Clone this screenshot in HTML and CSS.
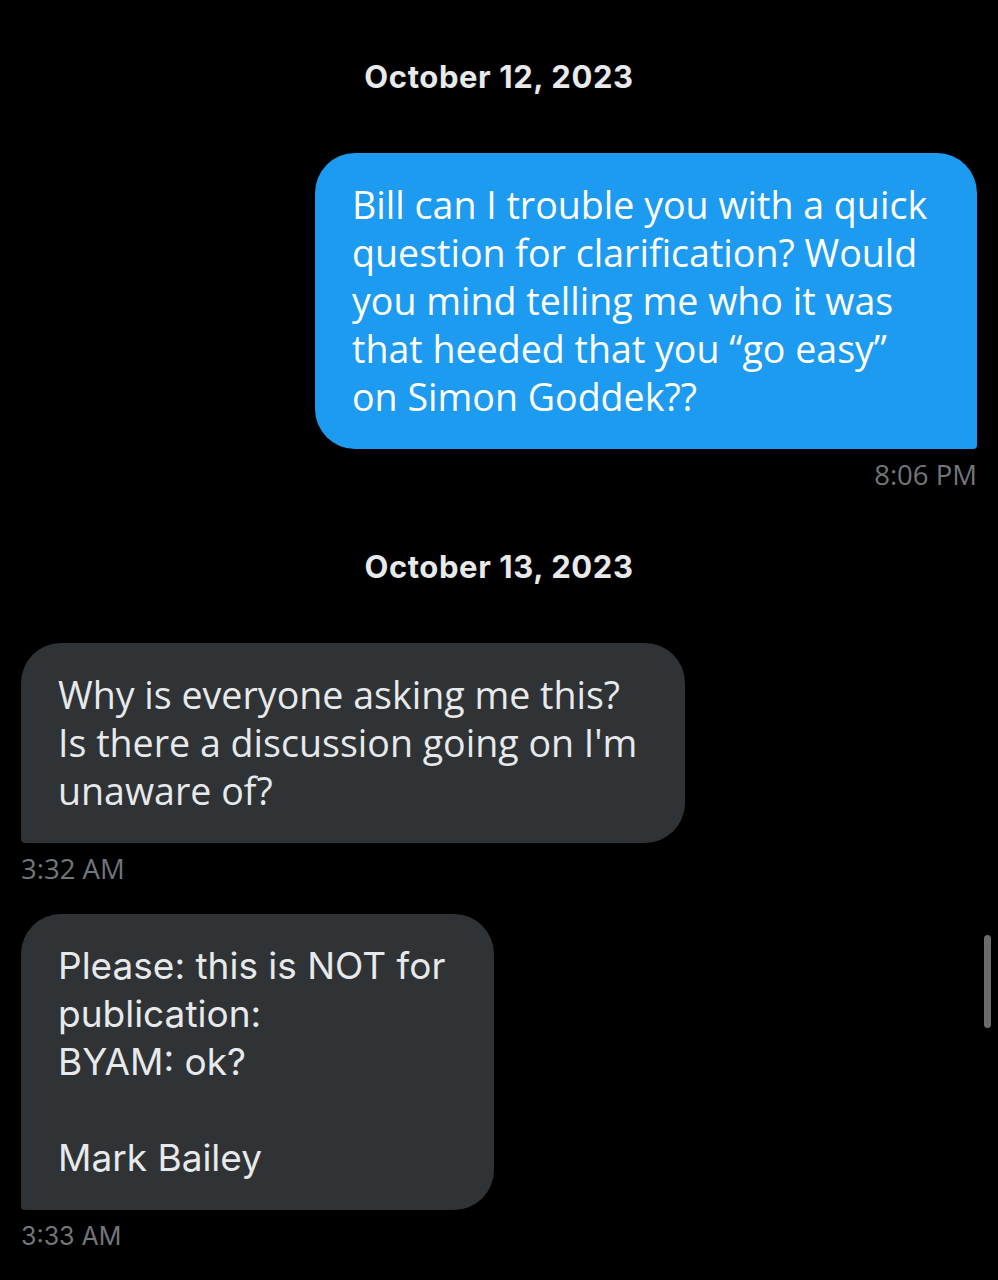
FILE: index.html
```html
<!DOCTYPE html>
<html>
<head>
  <title>Messages</title>
  <link rel="stylesheet" href="styles.css">
</head>
<body>

  <div class="chat">
    <div class="date first">October 12, 2023</div>

    <div class="msg out">
      <div class="bubble blue narrow b-quick">Bill can I trouble you with a quick<br>question for clarification? Would<br>you mind telling me who it was<br>that heeded that you “go easy”<br>on Simon Goddek??</div>
      <div class="time narrow">8:06 PM</div>
    </div>

    <div class="date">October 13, 2023</div>

    <div class="msg in">
      <div class="bubble grey narrow b-why">Why is everyone asking me this?<br>Is there a discussion going on I'm<br>unaware of?</div>
      <div class="time narrow">3:32 AM</div>
    </div>

    <div class="msg in next">
      <div class="bubble grey b-please">Please: this is NOT for<br>publication:<br>BYAM: ok?<br><br>Mark Bailey</div>
      <div class="time">3:33 AM</div>
    </div>
  </div>

  <div class="scrollbar"></div>

</body>
</html>
```

FILE: styles.css
```css
body {
  margin: 0;
  background-color: #000;
  color: #e7e9ea;
  font-family: Inter, "Liberation Sans", Arial, sans-serif;
}

.chat {
  padding: 0 21px;
}

.date {
  text-align: center;
  font-weight: bold;
  font-size: 31px;
  letter-spacing: 0.6px;
  line-height: 40px;
  color: #e7e9ea;
  margin-top: 57px;
  margin-bottom: 56px;
}

.msg {
  display: flex;
  flex-direction: column;
}

.msg.out {
  align-items: flex-end;
}

.msg.in {
  align-items: flex-start;
}

.msg.next {
  margin-top: 30px;
}

.bubble {
  box-sizing: border-box;
  padding: 28px 37px;
  font-size: 37px;
  line-height: 48px;
  border-radius: 40px;
}

.bubble.blue {
  background-color: #1d9bf0;
  color: #fff;
  border-bottom-right-radius: 4px;
}

.bubble.grey {
  background-color: #2f3336;
  color: #e7e9ea;
  border-bottom-left-radius: 4px;
}

.bubble.narrow {
  font-family: "Open Sans", "Liberation Sans", sans-serif;
  font-size: 37.6px;
}

.b-quick {
  width: 662px;
}

.b-why {
  width: 664px;
}

.b-please {
  width: 473px;
}

.time {
  margin-top: 11px;
  font-size: 25px;
  line-height: 30px;
  color: #71767b;
}

.time.narrow {
  font-family: "Open Sans", "Liberation Sans", sans-serif;
  font-size: 27.5px;
}

.scrollbar {
  position: absolute;
  left: 984px;
  top: 935px;
  width: 7px;
  height: 93px;
  border-radius: 4px;
  background-color: #6b6b6b;
}
```
